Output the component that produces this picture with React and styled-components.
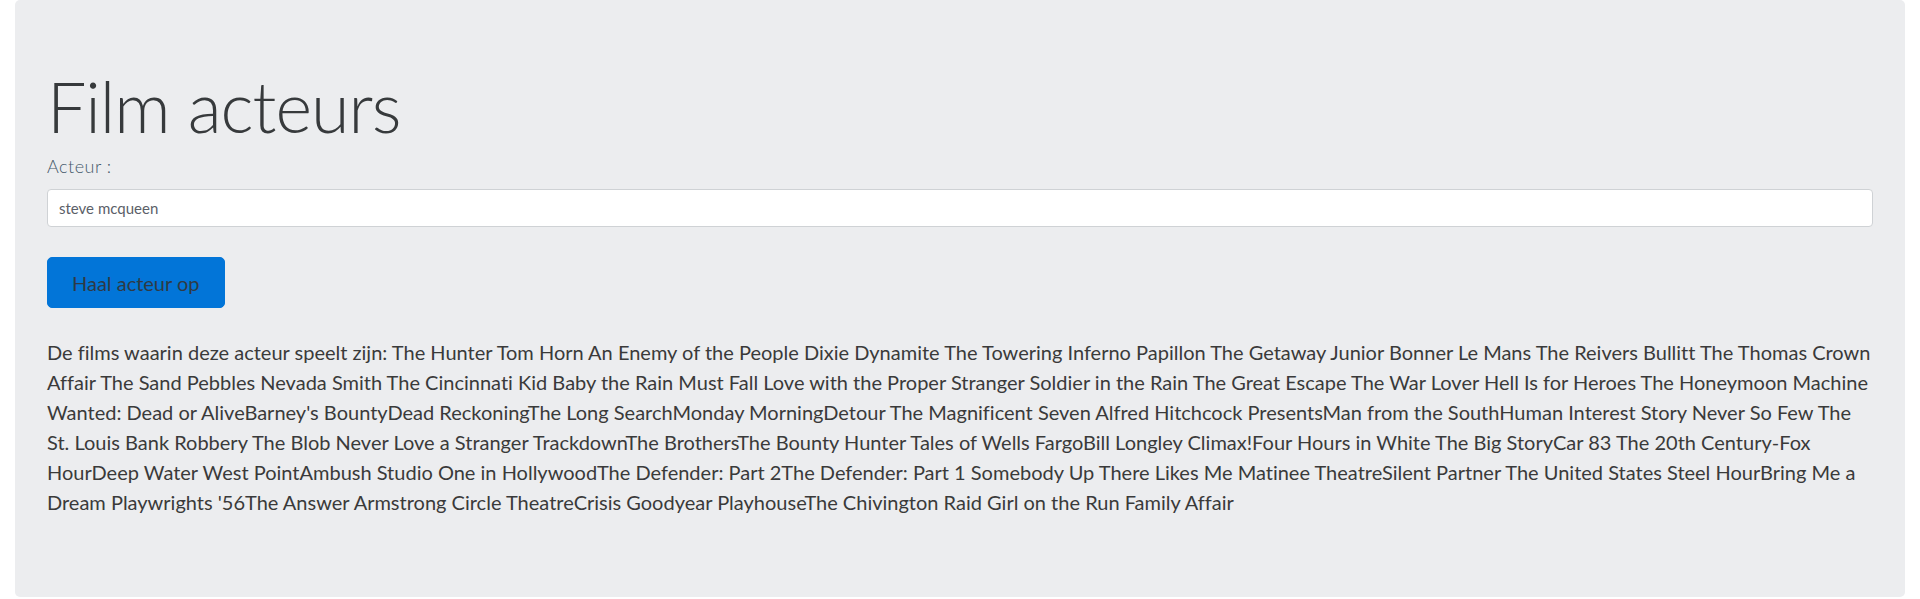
import React from "react";
import styled, { createGlobalStyle } from "styled-components";

const GlobalStyle = createGlobalStyle`
  html, body { margin: 0; padding: 0; background: #ffffff; }
  body {
    font-family: Lato, "Liberation Sans", sans-serif;
    color: #333333;
    font-variant-ligatures: none;
  }
  * { box-sizing: border-box; }
`;

const Page = styled.div`
  padding: 0 15px;
`;

const Jumbotron = styled.section`
  background: #ecedef;
  border-radius: 5px;
  padding: 64px 32px;
  display: flex;
  flex-direction: column;
  align-items: flex-start;
`;

const Title = styled.h1`
  margin: 0 0 6px;
  font-family: Lato, sans-serif;
  font-weight: 300;
  font-size: 70px;
  line-height: 1.2;
  letter-spacing: -1px;
  color: #373a3c;
`;

const Label = styled.label`
  font-family: Lato, sans-serif;
  font-weight: 300;
  font-size: 18px;
  line-height: 24px;
  letter-spacing: 0.5px;
  color: #45596b;
  margin-bottom: 11px;
`;

const Input = styled.input`
  width: 100%;
  height: 38px;
  padding: 0 11px;
  border: 1px solid #cfd2d5;
  border-radius: 4px;
  background: #ffffff;
  font-family: Lato, sans-serif;
  font-size: 15px;
  font-variant-ligatures: none;
  color: #5b6068;
  margin: 0 0 30px;
  outline: none;
`;

const Button = styled.button`
  background: #0275d8;
  border: 1px solid #0275d8;
  border-radius: 5px;
  padding: 9.5px 24px;
  font-family: Lato, sans-serif;
  font-size: 20px;
  line-height: 30px;
  color: #2f3a45;
  cursor: pointer;
  margin-bottom: 29px;
`;

const Films = styled.p`
  margin: 0 0 16px;
  font-family: Lato, sans-serif;
  font-weight: 400;
  font-size: 20px;
  line-height: 30px;
  color: #3a3a3a;
`;

const films =
  "De films waarin deze acteur speelt zijn: The Hunter Tom Horn An Enemy of the People Dixie Dynamite The Towering Inferno Papillon The Getaway Junior Bonner Le Mans The Reivers Bullitt The Thomas Crown Affair The Sand Pebbles Nevada Smith The Cincinnati Kid Baby the Rain Must Fall Love with the Proper Stranger Soldier in the Rain The Great Escape The War Lover Hell Is for Heroes The Honeymoon Machine Wanted: Dead or AliveBarney's BountyDead ReckoningThe Long SearchMonday MorningDetour The Magnificent Seven Alfred Hitchcock PresentsMan from the SouthHuman Interest Story Never So Few The St. Louis Bank Robbery The Blob Never Love a Stranger TrackdownThe BrothersThe Bounty Hunter Tales of Wells FargoBill Longley Climax!Four Hours in White The Big StoryCar 83 The 20th Century-Fox HourDeep Water West PointAmbush Studio One in HollywoodThe Defender: Part 2The Defender: Part 1 Somebody Up There Likes Me Matinee TheatreSilent Partner The United States Steel HourBring Me a Dream Playwrights '56The Answer Armstrong Circle TheatreCrisis Goodyear PlayhouseThe Chivington Raid Girl on the Run Family Affair";

export default function App() {
  return (
    <>
      <GlobalStyle />
      <Page>
        <Jumbotron>
          <Title>Film acteurs</Title>
          <Label htmlFor="acteur">Acteur :</Label>
          <Input id="acteur" type="text" defaultValue="steve mcqueen" />
          <Button type="button">Haal acteur op</Button>
          <Films>{films}</Films>
        </Jumbotron>
      </Page>
    </>
  );
}
